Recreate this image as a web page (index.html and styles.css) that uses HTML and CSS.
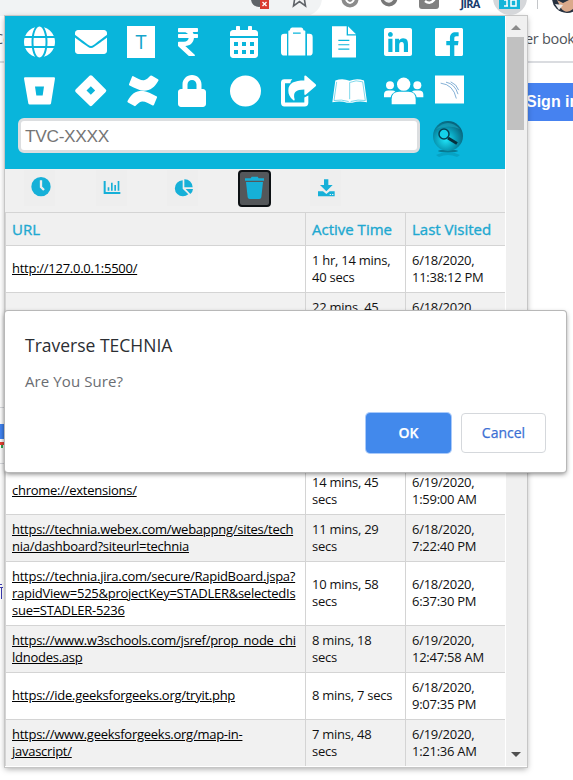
FILE: index.html
```html
<!DOCTYPE html>
<html lang="en">
<head>
<meta charset="utf-8">
<title>Traverse TECHNIA</title>
<link rel="stylesheet" href="styles.css">
</head>
<body>
<div class="browser">
  <div class="toolbar">
    <div class="omnibox"></div>
    <svg class="toolbar-icons" viewBox="240 0 333 16" width="333" height="16">
      <circle cx="259" cy="-1" r="8" fill="#5f6368"/><rect x="260" y="-1" width="9" height="10" fill="#d93b30"/><path d="M262.500 2l4 4m0-4l-4 4" stroke="#fff" stroke-width="1.300"/>
      <path d="M295 -3l-1.500 9 6-4.500 6 4.500-1.500-9" fill="none" stroke="#5f6368" stroke-width="1.600"/>
      <circle cx="350" cy="-1" r="8.500" fill="#8b8b8b"/><path d="M346 0q4 6 8 0" fill="none" stroke="#fff" stroke-width="2"/>
      <circle cx="389" cy="-2" r="8.500" fill="#777"/><path d="M385-1q4 5 8-1" fill="none" stroke="#eee" stroke-width="3"/>
      <rect x="419" y="-9" width="20" height="18" rx="3" fill="#808080"/><path d="M425 1q5 4 9-1v-3" fill="none" stroke="#fff" stroke-width="2.500"/>
      <text x="460.500" y="7.500" class="jira">JIRA</text>
      <circle cx="510" cy="-2" r="17" fill="#d5d7da"/><rect x="499" y="-8" width="21" height="17" fill="#14b5d9"/><path d="M504 0h3v6m4-7v7h5v-6h-5M504 6h4" fill="none" stroke="#fff" stroke-width="1.500"/>
      <path d="M537.500 0v9" stroke="#c4c6c9"/>
      <circle cx="567" cy="-2" r="15" fill="#26303f"/><path d="M557 0l6 3 10-5v11q-7 6-12-1z" fill="#dba98b"/><path d="M555 4l8 1-4 5z" fill="#eee"/>
    </svg>
  </div>
  <div class="bookmarks"><span class="mark-left">Co</span><span class="mark-right">er book</span></div>
  <div class="site"><span class="signin">Sign in</span></div>
  <svg class="edge" viewBox="0 400 6 205" width="6" height="205">
    <path d="M0 407.500h6M0 463.500h6" stroke="#dadce0"/><path d="M0 424h6v15H0z" fill="#4285f4"/><path d="M0 442h6v3H0z" fill="#ea4335"/><path d="M1 445h2v3H1z" fill="#34a853"/><path d="M0 584.500h2M0 587.500h3M1.500 588v11" stroke="#3b3bb0"/>
  </svg>
</div>

<div class="popup">
  <div class="content">
    <div class="hero">
      <div class="icons">
        <svg viewBox="0 0 496 512" width="31" height="32"><path d="M336.500 160C322 70.700 287.800 8 248 8s-74 62.700-88.500 152h177zM152 256c0 22.200 1.200 43.500 3.300 64h185.300c2.100-20.500 3.300-41.800 3.300-64s-1.200-43.500-3.300-64H155.300c-2.100 20.500-3.300 41.800-3.300 64zm324.700-96c-28.600-67.900-86.500-120.400-158-141.600 24.400 33.800 41.200 84.700 50 141.600h108zM177.200 18.400C105.800 39.600 47.800 92.100 19.300 160h108c8.700-56.900 25.500-107.800 49.900-141.600zM487.400 192H372.700c2.100 21 3.300 42.500 3.300 64s-1.200 43-3.300 64h114.600c5.500-20.500 8.600-41.800 8.600-64s-3.100-43.500-8.500-64zM120 256c0-21.500 1.200-43 3.300-64H8.600C3.200 212.500 0 233.800 0 256s3.200 43.500 8.600 64h114.600c-2-21-3.200-42.500-3.200-64zm39.500 96c14.500 89.300 48.700 152 88.500 152s74-62.700 88.500-152h-177zm159.300 141.600c71.400-21.200 129.400-73.700 158-141.600h-108c-8.800 56.900-25.600 107.800-50 141.600zM19.300 352c28.600 67.900 86.500 120.400 158 141.600-24.400-33.800-41.200-84.700-50-141.600h-108z"/></svg>
        <svg viewBox="0 0 512 512" width="32" height="32"><path d="M502.300 190.800c3.900-3.100 9.700-.2 9.700 4.700V400c0 26.500-21.500 48-48 48H48c-26.500 0-48-21.500-48-48V195.600c0-5 5.700-7.800 9.700-4.700 22.400 17.400 52.100 39.500 154.100 113.600 21.100 15.400 56.700 47.800 92.200 47.600 35.700.3 72-32.800 92.300-47.600 102-74.100 131.600-96.300 154-113.700zM256 320c23.200.4 56.600-29.200 73.400-41.400 132.700-96.300 142.800-104.700 173.400-128.700 5.800-4.500 9.200-11.500 9.200-18.900v-19c0-26.500-21.500-48-48-48H48c-26.500 0-48 21.500-48 48v19c0 7.400 3.400 14.300 9.200 18.900 30.600 23.900 40.700 32.400 173.400 128.700 16.800 12.200 50.200 41.800 73.400 41.400z"/></svg>
        <span class="t-tile">T</span>
        <svg viewBox="0 0 320 512" width="20" height="32"><path d="M308 96c6.627 0 12-5.373 12-12V44c0-6.627-5.373-12-12-12H12C5.373 32 0 37.373 0 44v44.748c0 6.627 5.373 12 12 12h85.280c27.308 0 48.261 9.958 60.970 27.252H12c-6.627 0-12 5.373-12 12v40c0 6.627 5.373 12 12 12h158.757c-6.217 36.086-32.594 58.632-74.757 58.632H12c-6.627 0-12 5.373-12 12v53.012c0 3.349 1.400 6.546 3.861 8.818l165.052 152.356a12.001 12.001 0 0 0 8.139 3.182h82.562c10.924 0 16.166-13.408 8.139-20.818L116.871 319.906c76.499-2.340 131.144-53.395 138.318-127.906H308c6.627 0 12-5.373 12-12v-40c0-6.627-5.373-12-12-12h-58.690c-3.486-11.541-8.280-22.246-14.252-32H308z"/></svg>
        <svg viewBox="0 0 448 512" width="28" height="32"><path fill-rule="evenodd" d="M0 464c0 26.500 21.500 48 48 48h352c26.500 0 48-21.500 48-48V192H0zM64 256h64v64H64zM192 256h64v64h-64zM320 256h64v64h-64zM64 384h64v64H64zM192 384h64v64h-64zM320 384h64v64h-64zM400 64h-48V16c0-8.800-7.200-16-16-16h-32c-8.800 0-16 7.200-16 16v48H160V16c0-8.800-7.200-16-16-16h-32c-8.800 0-16 7.200-16 16v48H48C21.500 64 0 85.500 0 112v48h448v-48c0-26.500-21.500-48-48-48z"/></svg>
        <svg viewBox="123 79.500 96 96" width="32" height="32"><path fill-rule="evenodd" d="M133 103h8v65h-8q-10 0-10-10v-45q0-10 10-10zM201 103h7q10 0 10 10v45q0 10-10 10h-7zM145 95q0-2 2-2h2q2-9 7-9h28q5 0 7 9h3q2 0 2 2v73h-51zM159 99v4h23v-4z"/></svg>
        <svg viewBox="276 79.500 72 96" width="24" height="32"><path fill-rule="evenodd" d="M276 80h44v28h28v66h-72zM324 80l24 24h-24zM295 121v3.500h33v-3.500zM295 134v3.500h33v-3.500zM295 147v3.500h33v-3.500z"/></svg>
        <svg viewBox="0 0 448 512" width="28" height="32"><path d="M416 32H31.900C14.300 32 0 46.500 0 64.300v383.400C0 465.500 14.300 480 31.900 480H416c17.600 0 32-14.500 32-32.300V64.300c0-17.800-14.400-32.300-32-32.300zM135.400 416H69V202.200h66.500V416zm-33.200-243c-21.300 0-38.500-17.300-38.500-38.500S80.900 96 102.200 96c21.200 0 38.500 17.300 38.500 38.500 0 21.300-17.200 38.500-38.500 38.500zm282.100 243h-66.400V312c0-24.800-.5-56.700-34.500-56.700-34.600 0-39.900 27-39.900 54.900V416h-66.400V202.200h63.700v29.200h.9c8.900-16.800 30.600-34.500 62.900-34.500 67.200 0 79.700 44.300 79.700 101.900V416z"/></svg>
        <svg viewBox="0 0 448 512" width="28" height="32"><path d="M448 56.700v398.500c0 13.700-11.100 24.700-24.700 24.700H309.100V306.500h58.200l8.700-67.600h-67v-43.200c0-19.600 5.400-32.900 33.500-32.900h35.800v-60.500c-6.200-.8-27.400-2.700-52.200-2.700-51.600 0-87 31.500-87 89.400v49.900h-58.400v67.600h58.400V480H24.700C11.100 480 0 468.900 0 455.300V56.700C0 43.100 11.100 32 24.700 32h398.500c13.700 0 24.800 11.100 24.800 24.700z"/></svg>

        <svg viewBox="72 226.500 96 96" width="32" height="32"><path fill-rule="evenodd" d="M75 233h87q3 0 3 4l-12 75q-1 3-4 3H89q-3 0-4-3L72 237q0-4 3-4zM105 261l4 27h19l4-27z"/></svg>
        <svg viewBox="224.500 226.500 96 96" width="32" height="32"><path fill-rule="evenodd" d="M268 229q4-4 8 0l40 40q5 4 0 9l-40 40q-4 4-8 0l-41-40q-4-4 0-9zM272 260l-13 13 13 13 13-13z"/></svg>
        <svg viewBox="379 226.500 96 96" width="32" height="32"><path id="swoosh" d="M398 230C411 237 421 243 430 242C438 241 444 234 449 229Q451 227 454 229L472 239Q475 241 473 244C462 263 450 274 430 274C415 273 400 264 387 258Q384 257 385 254L394 232Q395 229 398 230Z"/><use href="#swoosh" transform="rotate(180 427 274)"/></svg>
        <svg viewBox="0 0 448 512" width="28" height="32"><path d="M400 224h-24v-72C376 68.200 307.800 0 224 0S72 68.200 72 152v72H48c-26.500 0-48 21.500-48 48v192c0 26.500 21.500 48 48 48h352c26.500 0 48-21.500 48-48V272c0-26.500-21.500-48-48-48zm-104 0H152v-72c0-39.700 32.300-72 72-72s72 32.300 72 72v72z"/></svg>
        <svg viewBox="0 0 512 512" width="32" height="32"><circle cx="248" cy="256" r="248"/></svg>
        <svg viewBox="123 226.500 108 96" width="36" height="32"><path d="M157 239h-24q-10 0-10 10v61q0 11 10 11h61q11 0 11-11v-22l-12 6v15h-58v-58h16q0-8 6-12z"/><path d="M193 230q1-3 5-1l29 25q3 3 0 6l-29 25q-4 3-5-1v-14c-25 0-35 8-29 30q0 5-4 2c-11-9-15-18-15-29 0-23 19-30 48-30z"/></svg>
        <svg viewBox="276 226.500 108 96" width="36" height="32"><path d="M286 243q22-8 43 1 21-9 43-1l9 65q-26-5-44 2h-16q-18-7-44-2z"/><path d="M290 247l-8 56q22-4 44 3M329 249v50M329 249q19-9 39-2l8 56q-22-4-44 3" fill="none" stroke="#3fc5e2" stroke-width="2"/></svg>
        <svg viewBox="430 226.500 120 96" width="40" height="32"><circle cx="489" cy="254" r="20"/><circle cx="448" cy="257" r="12"/><circle cx="530" cy="257" r="12"/><path d="M453 314v-15q0-22 23-22h27q22 0 22 22v15z"/><path d="M430 293v-8q0-12 13-12h12q6 0 9 4-12 6-14 16zM548 293v-8q0-12-13-12h-12q-6 0-9 4 12 6 14 16z"/></svg>
        <svg viewBox="585 226.500 87 96" width="29" height="32"><path d="M585 228h87v84h-87z"/><path d="M602 251q38 4 47 46M618 248q27 5 36 36M632 247q18 7 24 25" stroke="#5793c5" stroke-width="2.200" fill="none"/></svg>
      </div>
      <div class="search">
        <div class="field">TVC-XXXX</div>
        <svg viewBox="0 0 34 40" width="34" height="40">
          <defs><radialGradient id="orb" cx=".42" cy=".62" r=".6"><stop offset="0" stop-color="#20e4f7"/><stop offset=".55" stop-color="#0aa0bb"/><stop offset="1" stop-color="#08677f"/></radialGradient></defs>
          <ellipse cx="17" cy="33" rx="10" ry="1.500" fill="#087991"/><path d="M5 37q12-6 24 0l-3 2q-9-4-18 0z" fill="#0796b4" opacity=".6"/>
          <circle cx="17" cy="18" r="15" fill="url(#orb)"/><path d="M5 11q12-12 24 0-11-5-24 0z" fill="#1ba9c2" opacity=".6"/>
          <circle cx="13" cy="16" r="5" fill="#14d0e9" stroke="#063f52" stroke-width="1.500"/><path d="M17 20l9 5.500" stroke="#06303e" stroke-width="3"/>
        </svg>
      </div>
    </div>

    <div class="tools">
      <span class="tool"><svg viewBox="74 179 93 108" width="31" height="36"><circle cx="125" cy="229" r="29"/><path d="M125 210v20l9 9" fill="none" stroke="#eee" stroke-width="7"/></svg></span>
      <span class="tool"><svg viewBox="287 179 93 108" width="31" height="36"><path d="M310 212h6v33h44v6h-50zM322 231h5v10h-5zM332 217h5v24h-5zM342 224h5v17h-5zM352 212h5v29h-5z"/></svg></span>
      <span class="tool"><svg viewBox="501 179 93 108" width="31" height="36"><path d="M548 210v25l17 17q-7 6-16 6a24 24 0 0 1-1-48zM553 207a24 24 0 0 1 25 24h-25zM557 236h22q-1 10-8 15z"/></svg></span>
      <span class="tool active"><svg viewBox="717 183 93 108" width="31" height="36"><path d="M735 205h17l3-5h18l3 5h16v7h-57zM738 216h51l-5 46q-1 5-6 5h-29q-5 0-6-5z"/></svg></span>
      <span class="tool"><svg viewBox="121 179 93 108" width="31" height="36"><path fill-rule="evenodd" d="M163 207h13v17h13l-19 19-19-19h12zM145 243h15l10 8 10-8h15v15h-50zM180 251v3h4v-3zM187 251v3h4v-3z"/></svg></span>
    </div>

    <table class="log">
      <colgroup><col class="c-url"><col class="c-time"><col class="c-last"></colgroup>
      <thead><tr><th>URL</th><th>Active Time</th><th>Last Visited</th></tr></thead>
      <tbody>
        <tr><td><a>http://127.0.0.1:5500/</a></td><td>1 hr, 14 mins,<br>40 secs</td><td>6/18/2020,<br>11:38:12 PM</td></tr>
        <tr><td></td><td>22 mins, 45<br>secs</td><td>6/18/2020,<br>&nbsp;</td></tr>
        <tr class="tall"><td></td><td></td><td></td></tr>
        <tr class="tall"><td></td><td></td><td></td></tr>
        <tr><td><a>chrome://extensions/</a></td><td>14 mins, 45<br>secs</td><td>6/19/2020,<br>1:59:00 AM</td></tr>
        <tr><td><a>https://technia.webex.com/webappng/sites/tech<br>nia/dashboard?siteurl=technia</a></td><td>11 mins, 29<br>secs</td><td>6/18/2020,<br>7:22:40 PM</td></tr>
        <tr class="tall"><td><a>https://technia.jira.com/secure/RapidBoard.jspa?<br>rapidView=525&amp;projectKey=STADLER&amp;selectedIs<br>sue=STADLER-5236</a></td><td>10 mins, 58<br>secs</td><td>6/18/2020,<br>6:37:30 PM</td></tr>
        <tr><td><a>https://www.w3schools.com/jsref/prop_node_chi<br>ldnodes.asp</a></td><td>8 mins, 18<br>secs</td><td>6/19/2020,<br>12:47:58 AM</td></tr>
        <tr><td><a>https://ide.geeksforgeeks.org/tryit.php</a></td><td>8 mins, 7 secs</td><td>6/18/2020,<br>9:07:35 PM</td></tr>
        <tr><td><a>https://www.geeksforgeeks.org/map-in-<br>javascript/</a></td><td>7 mins, 48<br>secs</td><td>6/19/2020,<br>1:21:36 AM</td></tr>
      </tbody>
    </table>
  </div>
  <div class="scrollbar"><i class="up"></i><i class="thumb"></i><i class="down"></i></div>
</div>

<div class="dialog">
  <h1>Traverse TECHNIA</h1>
  <p>Are You Sure?</p>
  <div class="actions"><span class="btn ok">OK</span><span class="btn cancel">Cancel</span></div>
</div>
</body>
</html>
```
FILE: styles.css
```css
* { box-sizing: border-box; }
body { margin: 0; width: 573px; height: 780px; overflow: hidden; background: #fff; font-family: "Open Sans", sans-serif; position: relative; }
svg { display: block; flex: none; }

.browser { height: 780px; overflow: hidden; }
.toolbar { height: 16px; display: flex; overflow: hidden; }
.omnibox { width: 322px; height: 36px; margin: -20px 0 0 0; background: #f1f3f4; border-radius: 0 18px 18px 0; flex: none; }
.toolbar-icons { margin-left: -82px; z-index: 1; }
.jira { font: 700 11px "Open Sans", sans-serif; fill: #173a6d; letter-spacing: -.8px; }
.bookmarks { height: 47px; display: flex; justify-content: space-between; align-items: center; border-bottom: 2px solid #dadce0; font-size: 14.500px; color: #50545a; white-space: nowrap; }
.mark-left { margin-left: -6px; }
.mark-right { width: 48px; letter-spacing: -.3px; }
.site { display: flex; justify-content: flex-end; padding-top: 20px; }
.signin { width: 48px; height: 38px; background: #4682f0; color: #fff; font: 700 16px/37px "Liberation Sans", sans-serif; white-space: nowrap; overflow: hidden; padding-left: 1px; }
.edge { margin-top: 279px; }

.popup { position: absolute; left: 5px; top: 16px; width: 522px; height: 751px; display: flex; background: #fff; box-shadow: 0 0 0 1px #c6c6c6, 0 2px 6px rgba(0,0,0,.35); }
.content { width: 500px; height: 750px; overflow: hidden; background: #f0f0f0; flex: none; }
.hero { height: 153px; background: #09b5db; padding: 10px 0 0 19px; }
.icons { display: grid; grid-template-columns: repeat(9, 51.400px); grid-auto-rows: 32px; row-gap: 17px; fill: #fff; }
.t-tile { width: 28px; height: 32px; margin-left: .2px; background: #fff; color: #15a5cb; font-size: 20px; line-height: 31px; text-align: center; }
.search { display: flex; margin: 11px 0 0 -6px; gap: 11px; }
.field { width: 402px; height: 35px; border: 3px solid #dcdee0; border-radius: 6px; background: #fff; color: #757575; font: 17.300px/30px "Liberation Sans", sans-serif; padding-left: 4px; letter-spacing: -.3px; }

.tools { height: 43px; display: flex; padding: 1px 0 0 19px; gap: 40.600px; }
.tool { width: 31px; height: 36px; fill: #16b0d8; background: #eee; }
.active { width: 33px; height: 37px; margin: 0 -1px; border: 2px solid #0d1114; border-radius: 4px; background: #54575a; overflow: hidden; display: flex; align-items: center; justify-content: center; }

.log { width: 500px; table-layout: fixed; border-collapse: collapse; background: #fff; color: #111; font-size: 13px; line-height: 17px; letter-spacing: -.26px; }
.c-url { width: 300px; }
.c-time { width: 100px; }
.c-last { width: 100px; }
.log th, .log td { border: 1px solid #d4d4d4; padding: 0 0 0 6px; text-align: left; vertical-align: middle; white-space: nowrap; }
.log th { height: 33px; background: #f0f0f0; color: #20a8d0; font-size: 15px; font-weight: 500; letter-spacing: 0; -webkit-text-stroke: .35px #20a8d0; }
.log td { height: 47px; padding-bottom: 1px; }
.log .tall td { height: 64px; }
.log tbody tr:nth-child(even) { background: #f1f1f1; }
.log a { text-decoration: underline; color: #000; }

.scrollbar { height: 750px; margin-left: 1px; background: #f0f0f0; display: flex; flex-direction: column; align-items: center; flex: 1; padding-right: 2px; }
.thumb { width: 17px; height: 93px; background: #c1c1c1; margin-top: 7px; }
.up { margin-top: 9px; border: 5px solid transparent; border-top: 0; border-bottom-color: #8b8b8b; }
.down { margin-top: auto; margin-bottom: 9px; border: 5px solid transparent; border-bottom: 0; border-top-color: #505050; }

.dialog { position: absolute; left: 5px; top: 311px; width: 561px; height: 161px; padding: 22px 20px 19px 20px; background: #fff; border-radius: 3px; box-shadow: 0 0 0 1px #b8b8b8, 0 2px 5px rgba(0,0,0,.5); display: flex; flex-direction: column; }
.dialog h1 { margin: 0; font-size: 17.500px; line-height: 25px; font-weight: 400; color: #2b2e33; }
.dialog p { margin: 12px 0 0; font-size: 15px; line-height: 22px; color: #6a6d72; letter-spacing: .1px; }
.actions { display: flex; justify-content: flex-end; gap: 10px; margin-top: auto; }
.btn { width: 85px; height: 40px; border-radius: 4px; border: 1px solid #d5d8dc; font-size: 14px; line-height: 38px; text-align: center; color: #3b6fd4; font-weight: 500; -webkit-text-stroke: .25px; }
.ok { background: #4289ec; color: #fff; border-color: #4289ec; box-shadow: 0 0 0 1px #a9cafa; font-weight: 600; }
```
